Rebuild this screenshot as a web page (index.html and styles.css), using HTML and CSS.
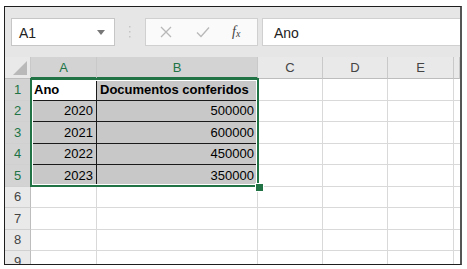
FILE: index.html
```html
<!DOCTYPE html>
<html lang="pt">
<head>
  <meta charset="UTF-8" />
  <title>Planilha</title>
  <link rel="stylesheet" href="styles.css">
</head>
<body>
  <div class="window">
    <div class="toolbar">
      <div class="namebox">
        <span>A1</span>
        <svg class="caret" width="8" height="5" viewBox="0 0 8 5"><path d="M0 0h8L4 5z" fill="#777"/></svg>
      </div>
      <svg class="grip" width="3" height="14" viewBox="0 0 3 14"><g fill="#c4c4c4"><rect x="1" y="1" width="1.5" height="1.5"/><rect x="1" y="6" width="1.5" height="1.5"/><rect x="1" y="11" width="1.5" height="1.5"/></g></svg>
      <div class="fbuttons">
        <svg class="btn" width="12" height="12" viewBox="0 0 12 12"><path d="M1 1L11 11M11 1L1 11" stroke="#b8b8b8" stroke-width="1.3"/></svg>
        <svg class="btn" width="14" height="12" viewBox="0 0 14 12"><path d="M1 6.5L5 10.5L13 1.5" stroke="#b8b8b8" stroke-width="1.3" fill="none"/></svg>
        <span class="fx">f<sub>x</sub></span>
      </div>
      <div class="formula">Ano</div>
    </div>

    <div class="sheet">
      <div class="corner"></div>
      <div class="ch on">A</div>
      <div class="ch on">B</div>
      <div class="ch">C</div>
      <div class="ch">D</div>
      <div class="ch">E</div>
      <div class="ch"></div>

      <div class="rh on">1</div>
      <div class="c d active b">Ano</div>
      <div class="c d sel b">Documentos conferidos</div>
      <div class="c"></div><div class="c"></div><div class="c"></div><div class="c"></div>

      <div class="rh on">2</div>
      <div class="c d sel n">2020</div>
      <div class="c d sel n">500000</div>
      <div class="c"></div><div class="c"></div><div class="c"></div><div class="c"></div>

      <div class="rh on">3</div>
      <div class="c d sel n">2021</div>
      <div class="c d sel n">600000</div>
      <div class="c"></div><div class="c"></div><div class="c"></div><div class="c"></div>

      <div class="rh on">4</div>
      <div class="c d sel n">2022</div>
      <div class="c d sel n">450000</div>
      <div class="c"></div><div class="c"></div><div class="c"></div><div class="c"></div>

      <div class="rh on">5</div>
      <div class="c d sel n">2023</div>
      <div class="c d sel n">350000</div>
      <div class="c"></div><div class="c"></div><div class="c"></div><div class="c"></div>

      <div class="rh">6</div>
      <div class="c"></div><div class="c"></div><div class="c"></div><div class="c"></div><div class="c"></div><div class="c"></div>
      <div class="rh">7</div>
      <div class="c"></div><div class="c"></div><div class="c"></div><div class="c"></div><div class="c"></div><div class="c"></div>
      <div class="rh">8</div>
      <div class="c"></div><div class="c"></div><div class="c"></div><div class="c"></div><div class="c"></div><div class="c"></div>
      <div class="rh">9</div>
      <div class="c"></div><div class="c"></div><div class="c"></div><div class="c"></div><div class="c"></div><div class="c"></div>

      <div class="selection"></div>
      <div class="handle"></div>
    </div>
  </div>
</body>
</html>
```

FILE: styles.css
```css
body { margin: 0; background: #fff; font-family: "Liberation Sans", Arial, sans-serif; }
.window { position: relative; margin: 6px 0 0 4px; width: 455px; height: 257px; border: 1px solid #1e1e1e; border-right: 2px solid #555; background: #e6e6e6; overflow: hidden; }

.toolbar { height: 50px; display: flex; align-items: center; padding-left: 6px; }
.namebox { width: 101px; height: 26px; background: #fff; border: 1px solid #c6c6c6; display: flex; align-items: center; justify-content: space-between; padding: 0 9px 0 7px; box-sizing: border-box; width: 104px; height: 28px; font-size: 14px; color: #222; }
.namebox span { padding-top: 1px; }
.grip { margin: 0 14px 0 13px; }
.fbuttons { width: 113px; height: 28px; box-sizing: border-box; background: #fafafa; border: 1px solid #d0d0d0; display: flex; align-items: center; padding-left: 14px; gap: 24px; }
.fx { font-family: "Liberation Serif", serif; font-style: italic; font-size: 14px; color: #444; margin-left: -2px; }
.fx sub { font-size: 10px; vertical-align: -1px; }
.formula { flex: 1; height: 28px; margin-left: 4px; background: #fff; border: 1px solid #d0d0d0; border-right: none; box-sizing: border-box; font-size: 14px; color: #222; padding: 6px 0 0 11px; }

.sheet { position: relative; display: grid; grid-template-columns: 26px 66px 161px 65px 65px 66px 6px; grid-template-rows: 22px repeat(9, 21.5px); background: #fff; font-size: 13px; color: #000; }
.corner { background: #e9e9e9; border-right: 1px solid #c9c9c9; border-bottom: 1px solid #bdbdbd; position: relative; }
.corner::after { content: ""; position: absolute; right: 3px; bottom: 3px; border-style: solid; border-width: 0 0 14px 14px; border-color: transparent transparent #b9b9b9 transparent; }
.ch { background: #e9e9e9; border-right: 1px solid #c9c9c9; border-bottom: 1px solid #bdbdbd; display: flex; align-items: center; justify-content: center; color: #444; }
.ch.on { background: #d3d3d3; color: #217346; border-bottom: 2px solid #217346; }
.rh { background: #e9e9e9; border-right: 1px solid #bdbdbd; border-bottom: 1px solid #d0d0d0; display: flex; align-items: center; justify-content: center; color: #444; }
.rh.on { background: #d3d3d3; color: #217346; }
.c { border-right: 1px solid #d9d9d9; border-bottom: 1px solid #d9d9d9; display: flex; align-items: center; padding: 0 3px; box-sizing: border-box; white-space: nowrap; }
.c.d { border-right-color: #1a1a1a; border-bottom-color: #1a1a1a; }
.c.sel { background: #c8c8c8; }
.c.active { background: #fff; }
.c.b { font-weight: bold; }
.c.n { justify-content: flex-end; }

.selection { position: absolute; left: 25px; top: 21px; width: 229px; height: 109px; border: 2px solid #217346; box-sizing: border-box; box-shadow: inset 0 0 0 1px #fff; }
.handle { position: absolute; left: 250px; top: 126px; width: 7px; height: 7px; background: #217346; border: 1px solid #fff; }
```
